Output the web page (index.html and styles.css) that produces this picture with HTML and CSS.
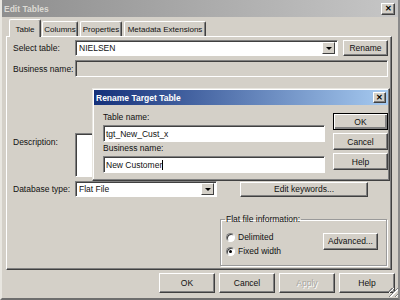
FILE: index.html
```html
<!DOCTYPE html>
<html lang="en">
<head>
    <meta charset="UTF-8">
    <title>Edit Tables</title>
    <link rel="stylesheet" href="styles.css">
</head>
<body>
    <div class="window">
        <div class="titlebar inactive">
            <span class="title-text">Edit Tables</span>
            <span class="close-btn">&#x2715;</span>
        </div>

        <div class="tabs">
            <div class="tab active">Table</div>
            <div class="tab tab-columns">Columns</div>
            <div class="tab tab-props">Properties</div>
            <div class="tab tab-meta">Metadata Extensions</div>
        </div>

        <div class="panel">
            <div class="row row-select">
                <span class="label">Select table:</span>
                <div class="field combo combo-table">
                    <span class="combo-text">NIELSEN</span>
                    <span class="combo-arrow"></span>
                </div>
                <button class="btn btn-rename">Rename</button>
            </div>

            <div class="row row-business">
                <span class="label">Business name:</span>
                <div class="field disabled wide"></div>
            </div>

            <div class="row row-desc">
                <span class="label">Description:</span>
                <div class="field textarea"></div>
            </div>

            <div class="row row-db">
                <span class="label">Database type:</span>
                <div class="field combo combo-db">
                    <span class="combo-text">Flat File</span>
                    <span class="combo-arrow"></span>
                </div>
                <button class="btn btn-keywords">Edit keywords...</button>
            </div>

            <fieldset class="group">
                <legend>Flat file information:</legend>
                <div class="group-body">
                    <div class="radios">
                        <label class="radio"><span class="radio-dot"></span>Delimited</label>
                        <label class="radio"><span class="radio-dot checked"></span>Fixed width</label>
                    </div>
                    <button class="btn btn-advanced">Advanced...</button>
                </div>
            </fieldset>
        </div>

        <div class="footer">
            <button class="btn btn-foot">OK</button>
            <button class="btn btn-foot">Cancel</button>
            <button class="btn btn-foot disabled-text">Apply</button>
            <button class="btn btn-foot">Help</button>
            <span class="grip"></span>
        </div>

        <!-- modal rename dialog on top of the main window -->
        <div class="dialog">
            <div class="titlebar active-title">
                <span class="title-text">Rename Target Table</span>
                <span class="close-btn small">&#x2715;</span>
            </div>
            <div class="dialog-body">
                <div class="dialog-fields">
                    <span class="dlabel">Table name:</span>
                    <div class="field dinput">tgt_New_Cust_x</div>
                    <span class="dlabel">Business name:</span>
                    <div class="field dinput">New Customer<span class="caret"></span></div>
                </div>
                <div class="dialog-buttons">
                    <button class="btn btn-dlg default">OK</button>
                    <button class="btn btn-dlg">Cancel</button>
                    <button class="btn btn-dlg">Help</button>
                </div>
            </div>
        </div>
    </div>
</body>
</html>
```

FILE: styles.css
```css
* {
    box-sizing: border-box;
}
body {
    margin: 0;
    font-family: 'Liberation Sans', Arial, sans-serif;
    font-size: 8.5px;
    color: #111;
    background: #d4d0c8;
}
.window {
    position: relative;
    width: 400px;
    height: 300px;
    background: #d4d0c8;
    border-left: 2px solid #e8e6e0;
    border-right: 2px solid #8a8a8a;
    border-bottom: 2px solid #6e6e6e;
    overflow: hidden;
}
.titlebar {
    display: flex;
    align-items: center;
    justify-content: space-between;
    height: 17px;
    padding: 0 3px 0 4px;
    font-weight: bold;
    font-size: 8.5px;
}
.titlebar.inactive {
    background: linear-gradient(to right, #8e8e8e, #c6c6c6);
    color: #dcdad4;
    margin-left: -2px;
}
.close-btn {
    display: flex;
    align-items: center;
    justify-content: center;
    width: 14px;
    height: 12px;
    background: #d4d0c8;
    color: #000;
    font-size: 8px;
    border: 1px solid;
    border-color: #fff #404040 #404040 #fff;
    box-shadow: inset -1px -1px #808080;
}
.close-btn.small {
    width: 13px;
    height: 11px;
}

/* tabs */
.tabs {
    display: flex;
    align-items: flex-end;
    height: 19px;
    margin-left: 7px;
    font-size: 8px;
}
.tab {
    position: relative;
    height: 15px;
    padding-top: 1px;
    margin-right: 2px;
    display: flex;
    align-items: center;
    justify-content: center;
    border: 1px solid;
    border-color: #fff #404040 transparent #fff;
    border-bottom: none;
    border-radius: 2px 2px 0 0;
    box-shadow: inset -1px 0 #808080;
}
.tab.active {
    height: 18px;
    width: 32px;
    margin-bottom: -1px;
    margin-right: 1px;
    background: #d4d0c8;
    z-index: 1;
}
.tab-columns {
    width: 36px;
}
.tab-props {
    width: 42px;
}
.tab-meta {
    width: 82px;
}

/* main panel */
.panel {
    margin: 0 6px 0 4px;
    height: 234px;
    padding: 3px 3px 0 6px;
    border: 1px solid;
    border-color: #fff #404040 #404040 #fff;
    box-shadow: inset -1px -1px #808080;
}
.row {
    display: flex;
    align-items: center;
}
.label {
    width: 62px;
    flex-shrink: 0;
}
.field {
    background: #fff;
    border: 1px solid;
    border-color: #808080 #fff #fff #808080;
    box-shadow: inset 1px 1px #404040;
}
.field.disabled {
    background: #d4d0c8;
}
.combo {
    display: flex;
    align-items: center;
    justify-content: space-between;
    padding: 2px 2px 2px 3px;
}
.combo-table {
    width: 263px;
    height: 16px;
}
.combo-arrow {
    width: 13px;
    height: 12px;
    background: #d4d0c8;
    border: 1px solid;
    border-color: #fff #404040 #404040 #fff;
    display: flex;
    align-items: center;
    justify-content: center;
}
.combo-arrow::after {
    content: "";
    border-left: 3px solid transparent;
    border-right: 3px solid transparent;
    border-top: 3px solid #000;
}
.btn {
    font-family: inherit;
    font-size: inherit;
    color: #111;
    background: #d4d0c8;
    padding: 0;
    border: 1px solid;
    border-color: #fff #404040 #404040 #fff;
    box-shadow: inset -1px -1px #808080;
}
.btn-rename {
    width: 45px;
    height: 16px;
    margin-left: 5px;
}
.row-business {
    margin-top: 4px;
}
.wide {
    width: 313px;
    height: 17px;
}
.row-desc {
    margin-top: 56px;
    align-items: flex-start;
}
.row-desc .label {
    padding-top: 4px;
}
.textarea {
    width: 160px;
    height: 44px;
}
.row-db {
    margin-top: 4px;
}
.combo-db {
    width: 142px;
    height: 16px;
}
.btn-keywords {
    width: 128px;
    height: 15px;
    margin-left: 23px;
}

/* flat file group */
.group {
    margin: 17px 0 0 207px;
    width: 167px;
    height: 52px;
    padding: 0 8px 0 5px;
    border: 1px solid #9a9a9a;
    box-shadow: 1px 1px #fff, inset 1px 1px #fff;
}
.group legend {
    padding: 0 1px;
    margin-left: -1px;
}
.group-body {
    display: flex;
    align-items: center;
    justify-content: space-between;
}
.radios {
    display: flex;
    flex-direction: column;
    gap: 4px;
    padding-top: 8px;
}
.radio {
    display: flex;
    align-items: center;
    gap: 3px;
}
.radio-dot {
    width: 9px;
    height: 9px;
    border-radius: 50%;
    background: #fff;
    border: 1px solid;
    border-color: #808080 #fff #fff #808080;
    box-shadow: inset 1px 1px #404040;
    display: flex;
    align-items: center;
    justify-content: center;
}
.radio-dot.checked::after {
    content: "";
    width: 3px;
    height: 3px;
    border-radius: 50%;
    background: #000;
}
.btn-advanced {
    width: 55px;
    height: 17px;
    margin-top: 2px;
}

/* footer */
.footer {
    position: relative;
    display: flex;
    justify-content: flex-end;
    gap: 4px;
    padding: 3px 3px 0 0;
}
.btn-foot {
    width: 56px;
    height: 20px;
}
.disabled-text {
    color: #a8a6a0;
    text-shadow: 1px 1px #fff;
}
.grip {
    position: absolute;
    right: 0;
    bottom: -4px;
    width: 9px;
    height: 9px;
    background: repeating-linear-gradient(135deg, transparent 0 2px, #808080 2px 3px, #fff 3px 4px);
}

/* rename dialog */
.dialog {
    position: absolute;
    left: 90px;
    top: 88px;
    width: 298px;
    height: 93px;
    background: #d4d0c8;
    border: 1px solid;
    border-color: #e8e6e0 #404040 #404040 #e8e6e0;
    box-shadow: inset -1px -1px #808080, inset 1px 1px #fff;
    padding: 1px;
}
.titlebar.active-title {
    height: 15px;
    padding: 0 2px 0 2px;
    background: linear-gradient(to right, #14307a, #a6caf0);
    color: #fff;
}
.dialog-body {
    display: flex;
    padding: 0 0 0 9px;
}
.dialog-fields {
    display: flex;
    flex-direction: column;
    width: 224px;
    padding-top: 7px;
}
.dlabel {
    height: 13px;
    line-height: 10px;
}
.dinput {
    height: 17px;
    padding: 3px 2px;
    margin-bottom: 1px;
    display: flex;
    align-items: center;
}
.caret {
    width: 1px;
    height: 10px;
    background: #000;
}
.dialog-buttons {
    display: flex;
    flex-direction: column;
    gap: 3px;
    margin-left: 8px;
    padding-top: 8px;
}
.btn-dlg {
    width: 55px;
    height: 17px;
}
.btn-dlg.default {
    border-color: #000;
    box-shadow: inset 1px 1px #fff, inset -2px -2px #808080;
}
```
